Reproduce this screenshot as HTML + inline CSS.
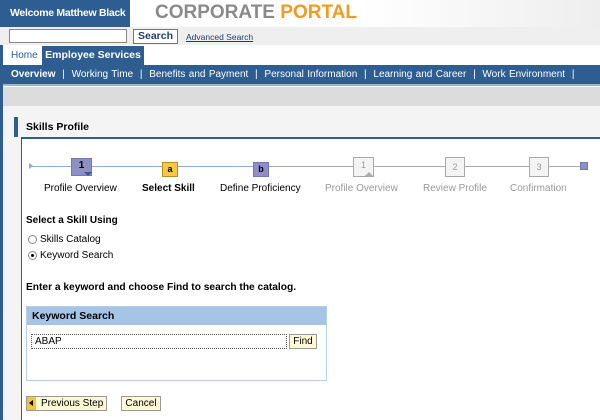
<!DOCTYPE html>
<html><head><style>
*{margin:0;padding:0;box-sizing:border-box}
body{width:600px;height:420px;overflow:hidden;background:#fff;font-family:"Liberation Sans",Arial,sans-serif;font-size:10px;position:relative;color:#000}
.a{position:absolute;white-space:nowrap}
</style></head><body>
<div class="a" style="left:0;top:0;width:600px;height:27px;background:linear-gradient(90deg,#fff 0,#fff 60%,#eee 100%)"></div>
<div class="a" style="left:0;top:0;width:3px;height:420px;background:#2d5d91"></div>
<div class="a" style="left:3px;top:0;width:127px;height:27px;background:#2d5d91;color:#fff;font-weight:bold;font-size:10.5px;letter-spacing:-0.3px;line-height:27px;padding-left:7px;overflow:hidden">Welcome Matthew Black</div>
<div class="a" style="left:155px;top:2px;font-size:19px;font-weight:bold;color:#8a8a8a">CORPORATE <span style="color:#f39a1f">PORTAL</span></div>
<div class="a" style="left:0;top:27px;width:600px;height:18px;background:#efefef"></div>
<div class="a" style="left:9px;top:29px;width:118px;height:14px;background:#fff;border:1px solid #888"></div>
<div class="a" style="left:133px;top:29px;width:45px;height:15px;background:#fff;border:1px solid #777;color:#1d3f70;font-weight:bold;font-size:10.5px;text-align:center;line-height:13px">Search</div>
<div class="a" style="left:186px;top:32px;font-size:8.5px;color:#1d3f70;text-decoration:underline">Advanced Search</div>
<div class="a" style="left:3px;top:46px;width:597px;height:19px;background:#fff"></div>
<div class="a" style="left:11px;top:50px;font-size:10px;color:#2d5d91">Home</div>
<div class="a" style="left:42px;top:46px;width:102px;height:19px;background:#2d5d91;color:#fff;font-weight:bold;font-size:10.5px;line-height:19px;text-align:center">Employee Services</div>
<div class="a" style="left:3px;top:65px;width:597px;height:21px;background:#2d5d91;border-bottom:2px solid #9db4cc;color:#fff;font-size:10px;line-height:19px;padding-left:8px;overflow:hidden;word-spacing:0.6px">
<b>Overview</b> &nbsp;| &nbsp;Working Time &nbsp;| &nbsp;Benefits and Payment &nbsp;| &nbsp;Personal Information &nbsp;| &nbsp;Learning and Career &nbsp;| &nbsp;Work Environment &nbsp;|</div>
<div class="a" style="left:3px;top:87px;width:597px;height:19px;background:#dcdcdc"></div>
<div class="a" style="left:3px;top:106px;width:597px;height:314px;background:#f4f4f4"></div>
<div class="a" style="left:21px;top:137px;width:579px;height:283px;background:#fff;border-left:1px solid #2d5d91;border-top:2px solid #2d5d91"></div>
<div class="a" style="left:14px;top:117px;width:4px;height:20px;background:#2d5d91"></div>
<div class="a" style="left:26px;top:121px;font-weight:bold;font-size:10.5px">Skills Profile</div>
<div class="a" style="left:29px;top:166px;width:244px;height:1px;background:#8eaad6"></div>
<div class="a" style="left:273px;top:166px;width:310px;height:1px;background:#aaa"></div>
<div class="a" style="left:29px;top:163px;width:0;height:0;border-left:4px solid #8eaad6;border-top:3px solid transparent;border-bottom:3px solid transparent"></div>
<div class="a" style="left:71px;top:158px;width:21px;height:18px;background:#8f8fc4;border:1px solid #6f79b8;font-weight:bold;font-size:10px;text-align:center;line-height:14px">1</div>
<div class="a" style="left:84px;top:172px;width:0;height:0;border-top:4px solid #2d5d91;border-left:4px solid transparent;border-right:4px solid transparent"></div>
<div class="a" style="left:162px;top:162px;width:16px;height:15px;background:#f7c843;border:1px solid #b49020;font-weight:bold;font-size:9px;text-align:center;line-height:13px">a</div>
<div class="a" style="left:253px;top:162px;width:16px;height:15px;background:#8f8fc4;border:1px solid #6f79b8;font-weight:bold;font-size:9px;text-align:center;line-height:13px">b</div>
<div class="a" style="left:353px;top:157px;width:21px;height:20px;background:#f4f4f4;border:1px solid #aaa;color:#999;font-size:9px;text-align:center;line-height:15px">1</div>
<div class="a" style="left:365px;top:172px;width:0;height:0;border-bottom:4px solid #aaa;border-left:4px solid transparent;border-right:4px solid transparent"></div>
<div class="a" style="left:445px;top:157px;width:20px;height:20px;background:#f4f4f4;border:1px solid #aaa;color:#999;font-size:9px;text-align:center;line-height:18px">2</div>
<div class="a" style="left:529px;top:157px;width:20px;height:20px;background:#f4f4f4;border:1px solid #aaa;color:#999;font-size:9px;text-align:center;line-height:18px">3</div>
<div class="a" style="left:580px;top:162px;width:8px;height:8px;background:#8f8fc4;border:1px solid #6f79b8"></div>
<div class="a" style="left:44px;top:183px">Profile Overview</div>
<div class="a" style="left:142px;top:183px;font-weight:bold">Select Skill</div>
<div class="a" style="left:220px;top:183px">Define Proficiency</div>
<div class="a" style="left:325px;top:183px;color:#999">Profile Overview</div>
<div class="a" style="left:423px;top:183px;color:#999">Review Profile</div>
<div class="a" style="left:510px;top:183px;color:#999">Confirmation</div>
<div class="a" style="left:26px;top:215px;font-weight:bold">Select a Skill Using</div>
<div class="a" style="left:28px;top:235px;width:9px;height:9px;border:1px solid #888;border-radius:50%;background:#fff"></div>
<div class="a" style="left:40px;top:234px">Skills Catalog</div>
<div class="a" style="left:28px;top:251px;width:9px;height:9px;border:1px solid #888;border-radius:50%;background:#fff"></div>
<div class="a" style="left:31px;top:254px;width:3px;height:3px;border-radius:50%;background:#000"></div>
<div class="a" style="left:40px;top:250px">Keyword Search</div>
<div class="a" style="left:26px;top:282px;font-weight:bold;font-size:10.2px">Enter a keyword and choose Find to search the catalog.</div>
<div class="a" style="left:26px;top:306px;width:301px;height:75px;border:1px solid #b8cde8;background:#fff"></div>
<div class="a" style="left:27px;top:307px;width:299px;height:18px;background:#a6c4e6;font-weight:bold;font-size:10.5px;line-height:18px;padding-left:5px">Keyword Search</div>
<div class="a" style="left:31px;top:334px;width:256px;height:15px;border:1px dotted #555;background:#fff;line-height:13px;padding-left:3px">ABAP</div>
<div class="a" style="left:289px;top:334px;width:28px;height:15px;border:1px solid #999;background:#fef9d5;text-align:center;line-height:13px">Find</div>
<div class="a" style="left:26px;top:396px;width:81px;height:15px;border:1px solid #999;background:#fef9d5;line-height:13px;padding-left:14px">Previous Step</div>
<div class="a" style="left:27px;top:397px;width:9px;height:13px;background:#f5c23a"></div>
<div class="a" style="left:29px;top:400px;width:0;height:0;border-right:4px solid #000;border-top:3px solid transparent;border-bottom:3px solid transparent"></div>
<div class="a" style="left:121px;top:396px;width:40px;height:15px;border:1px solid #999;background:#fef9d5;text-align:center;line-height:13px">Cancel</div>
</body></html>
